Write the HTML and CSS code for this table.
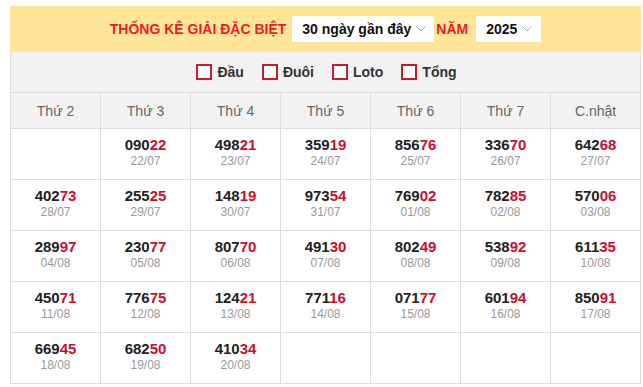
FILE: index.html
```html
<!DOCTYPE html>
<html lang="vi">
<head>
<meta charset="utf-8">
<title>Thống kê giải đặc biệt</title>
<link rel="stylesheet" href="styles.css">
</head>
<body>
<div class="wrap">
  <div class="head">
    <span class="title">THỐNG KÊ GIẢI ĐẶC BIỆT</span>
    <div class="sel sel-range"><span>30 ngày gần đây</span><svg class="chev" width="10" height="6" viewBox="0 0 10 6"><polyline points="0.5,0.5 5,5 9.5,0.5" fill="none" stroke="#aaa" stroke-width="1"/></svg></div>
    <span class="title nam">NĂM</span>
    <div class="sel sel-year"><span>2025</span><svg class="chev" width="10" height="6" viewBox="0 0 10 6"><polyline points="0.5,0.5 5,5 9.5,0.5" fill="none" stroke="#aaa" stroke-width="1"/></svg></div>
  </div>
  <div class="filters">
    <label class="chk"><span class="box"></span>Đầu</label>
    <label class="chk"><span class="box"></span>Đuôi</label>
    <label class="chk"><span class="box"></span>Loto</label>
    <label class="chk"><span class="box"></span>Tổng</label>
  </div>
  <table class="grid">
    <thead>
      <tr><th>Thứ 2</th><th>Thứ 3</th><th>Thứ 4</th><th>Thứ 5</th><th>Thứ 6</th><th>Thứ 7</th><th>C.nhật</th></tr>
    </thead>
    <tbody>
      <tr>
        <td></td>
        <td><div class="num">090<em>22</em></div><div class="date">22/07</div></td>
        <td><div class="num">498<em>21</em></div><div class="date">23/07</div></td>
        <td><div class="num">359<em>19</em></div><div class="date">24/07</div></td>
        <td><div class="num">856<em>76</em></div><div class="date">25/07</div></td>
        <td><div class="num">336<em>70</em></div><div class="date">26/07</div></td>
        <td><div class="num">642<em>68</em></div><div class="date">27/07</div></td>
      </tr>
      <tr>
        <td><div class="num">402<em>73</em></div><div class="date">28/07</div></td>
        <td><div class="num">255<em>25</em></div><div class="date">29/07</div></td>
        <td><div class="num">148<em>19</em></div><div class="date">30/07</div></td>
        <td><div class="num">973<em>54</em></div><div class="date">31/07</div></td>
        <td><div class="num">769<em>02</em></div><div class="date">01/08</div></td>
        <td><div class="num">782<em>85</em></div><div class="date">02/08</div></td>
        <td><div class="num">570<em>06</em></div><div class="date">03/08</div></td>
      </tr>
      <tr>
        <td><div class="num">289<em>97</em></div><div class="date">04/08</div></td>
        <td><div class="num">230<em>77</em></div><div class="date">05/08</div></td>
        <td><div class="num">807<em>70</em></div><div class="date">06/08</div></td>
        <td><div class="num">491<em>30</em></div><div class="date">07/08</div></td>
        <td><div class="num">802<em>49</em></div><div class="date">08/08</div></td>
        <td><div class="num">538<em>92</em></div><div class="date">09/08</div></td>
        <td><div class="num">611<em>35</em></div><div class="date">10/08</div></td>
      </tr>
      <tr>
        <td><div class="num">450<em>71</em></div><div class="date">11/08</div></td>
        <td><div class="num">776<em>75</em></div><div class="date">12/08</div></td>
        <td><div class="num">124<em>21</em></div><div class="date">13/08</div></td>
        <td><div class="num">771<em>16</em></div><div class="date">14/08</div></td>
        <td><div class="num">071<em>77</em></div><div class="date">15/08</div></td>
        <td><div class="num">601<em>94</em></div><div class="date">16/08</div></td>
        <td><div class="num">850<em>91</em></div><div class="date">17/08</div></td>
      </tr>
      <tr>
        <td><div class="num">669<em>45</em></div><div class="date">18/08</div></td>
        <td><div class="num">682<em>50</em></div><div class="date">19/08</div></td>
        <td><div class="num">410<em>34</em></div><div class="date">20/08</div></td>
        <td></td>
        <td></td>
        <td></td>
        <td></td>
      </tr>
    </tbody>
  </table>
</div>
</body>
</html>
```
FILE: styles.css
```css
* { box-sizing: border-box; }
body {
  margin: 0;
  background: #fff;
  font-family: "Liberation Sans", Arial, sans-serif;
}
.wrap {
  width: 631px;
  margin: 6px 0 0 10px;
}
.head {
  height: 46px;
  background: #ffe597;
  display: flex;
  align-items: center;
  justify-content: center;
}
.title {
  color: #ed1c24;
  font-weight: bold;
  font-size: 14px;
  margin-right: 6px;
}
.title.nam {
  margin-left: 2px;
  margin-right: 8px;
}
.sel {
  height: 26px;
  background: #fff;
  display: flex;
  align-items: center;
  justify-content: space-between;
  font-weight: bold;
  font-size: 14px;
  color: #111;
  padding: 0 8px 0 10px;
}
.sel-range { width: 142px; }
.sel-year { width: 65px; padding-left: 10px; padding-right: 9px; }
.chev { display: block; }
.filters {
  height: 40px;
  background: #f2f2f2;
  border-left: 1px solid #ddd;
  border-right: 1px solid #ddd;
  display: flex;
  align-items: center;
  justify-content: center;
  gap: 18px;
  padding-left: 2px;
}
.chk {
  display: flex;
  align-items: center;
  font-weight: bold;
  font-size: 14px;
  color: #333;
}
.box {
  width: 16px;
  height: 16px;
  border: 2px solid #c0202e;
  background: #fff;
  margin-right: 5px;
}
.grid {
  width: 631px;
  border-collapse: collapse;
  table-layout: fixed;
}
.grid th, .grid td {
  border: 1px solid #ddd;
  text-align: center;
  padding: 0;
}
.grid th {
  height: 36px;
  background: #f2f2f2;
  font-weight: normal;
  font-size: 14px;
  color: #666;
}
.grid td {
  height: 51px;
  vertical-align: top;
  padding-top: 7px;
}
.num {
  font-weight: bold;
  font-size: 15px;
  line-height: 18px;
  color: #222;
}
.num em {
  font-style: normal;
  color: #c8102e;
}
.date {
  font-size: 12px;
  line-height: 14px;
  color: #999;
}
```
